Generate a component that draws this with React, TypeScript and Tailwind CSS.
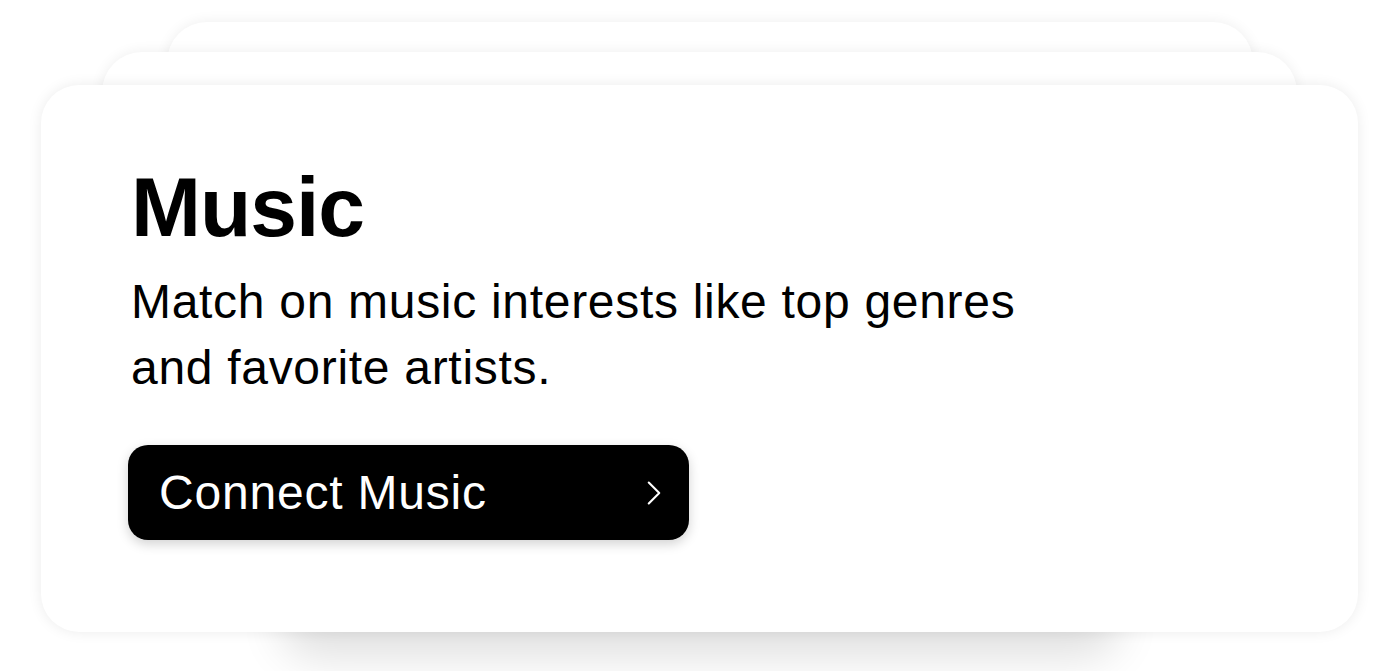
import { ChevronRight } from 'lucide-react';

function BackCard({ className }: { className: string }) {
  return (
    <div
      className={`absolute bg-white rounded-[40px] shadow-[0_0_14px_rgba(0,0,0,0.07)] ${className}`}
    />
  );
}

export default function App() {
  return (
    <div
      className="w-[1400px] h-[671px] bg-white overflow-hidden"
      style={{ fontFamily: '"Liberation Sans", Arial, sans-serif' }}
    >
      <div className="relative pt-[85px] pl-[41px]">
        {/* stacked cards behind */}
        <BackCard className="left-[167px] top-[22px] w-[1086px] h-[500px]" />
        <BackCard className="left-[102px] top-[52px] w-[1195px] h-[520px]" />
        <div className="absolute left-[280px] top-[560px] w-[840px] h-[72px] rounded-[60px] shadow-[0_26px_44px_rgba(0,0,0,0.12)]" />

        <div className="relative w-[1317px] h-[547px] bg-white rounded-[38px] shadow-[0_0_14px_rgba(0,0,0,0.08)] pl-[90px] pt-[80px]">
          <h1 className="text-[84px] leading-[84px] font-bold text-black tracking-[-1px]">Music</h1>
          <p className="mt-[20px] text-[48px] leading-[66px] text-black tracking-[0.7px]">
            Match on music interests like top genres
            <br />
            and favorite artists.
          </p>
          <button className="mt-[44px] -ml-[3px] w-[561px] h-[95px] bg-black rounded-[20px] flex items-center justify-between pl-[31px] pr-[14px] shadow-[0_4px_12px_rgba(0,0,0,0.18)]">
            <span className="text-white text-[48px] leading-none tracking-[0.8px]">Connect Music</span>
            <ChevronRight className="text-white w-[42px] h-[42px]" strokeWidth={1.2} />
          </button>
        </div>
      </div>
    </div>
  );
}
